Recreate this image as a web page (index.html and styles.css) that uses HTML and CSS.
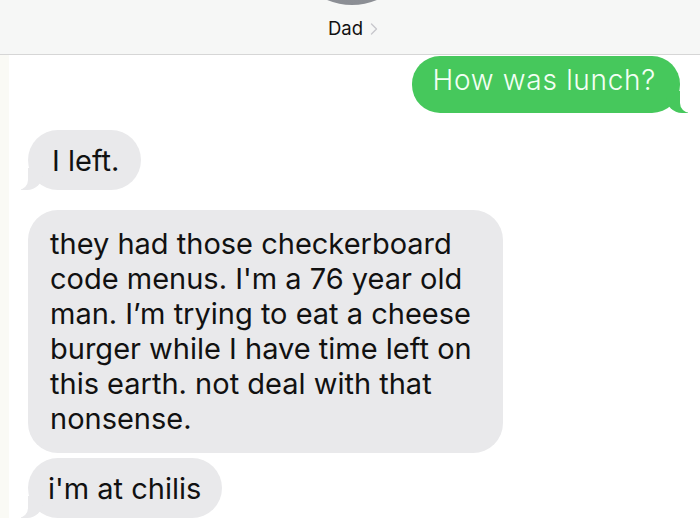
FILE: index.html
```html
<!DOCTYPE html>
<html lang="en">
<head>
  <meta charset="UTF-8">
  <meta name="viewport" content="width=device-width, initial-scale=1">
  <title>Dad - Messages</title>
  <link rel="stylesheet" href="styles.css">
</head>
<body>
  <header class="chat-header">
    <div class="avatar"></div>
    <div class="contact">
      <span class="contact-name">Dad</span>
      <svg class="chevron" width="8" height="12" viewBox="0 0 8 12">
        <path d="M1.5 1 L6.5 6 L1.5 11" fill="none" stroke="#c7c7cc" stroke-width="1.3" stroke-linecap="round" stroke-linejoin="round"/>
      </svg>
    </div>
  </header>
  <main class="thread">
    <div class="bubble out">How was lunch?</div>
    <div class="bubble in first">I left.</div>
    <div class="bubble in long">they had those checkerboard code menus. I'm a 76 year old man. I’m trying to eat a cheese burger while I have time left on this earth. not deal with that nonsense.</div>
    <div class="bubble in last">i'm at chilis</div>
  </main>
</body>
</html>
```

FILE: styles.css
```css
:root {
  --header-bg: #f6f7f6;
  --header-line: #d6d6d6;
  --in-bg: #e9e9eb;
  --out-bg: #46c85c;
  --page-bg: #fff;
}
html, body {
  height: 100%;
}
body {
  margin: 0;
  padding: 0;
  background: var(--page-bg);
  font-family: 'Inter', 'Liberation Sans', sans-serif;
  color: #111;
  overflow: hidden;
  display: flex;
  flex-direction: column;
}
.chat-header {
  height: 54px;
  flex-shrink: 0;
  background: var(--header-bg);
  border-bottom: 1px solid var(--header-line);
  display: flex;
  flex-direction: column;
  align-items: center;
  overflow: hidden;
}
.avatar {
  width: 130px;
  height: 130px;
  flex-shrink: 0;
  margin-top: -125px;
  margin-left: 4px;
  border-radius: 50%;
  background: linear-gradient(#a3a6ab, #8b8e94);
}
.contact {
  margin-top: 12px;
  margin-left: 6px;
  display: flex;
  align-items: center;
  gap: 7px;
}
.contact-name {
  font-size: 18.5px;
  line-height: 22px;
}
.chevron {
  margin-top: 1px;
}
.thread {
  flex: 1;
  min-height: 0;
  display: flex;
  flex-direction: column;
  align-items: flex-start;
  padding: 0 20px 0 28px;
  background: linear-gradient(to right, #fafaf5 9px, transparent 9px);
}
.bubble {
  position: relative;
  flex-shrink: 0;
  font-size: 29px;
  line-height: 35px;
  border-radius: 30px;
}
.bubble.in {
  background: var(--in-bg);
  padding: 13px 22px 12px 24px;
}
.bubble.out {
  align-self: flex-end;
  margin-top: 1px;
  background: var(--out-bg);
  color: #f3fff4;
  font-size: 28px;
  font-weight: 300;
  letter-spacing: 0.7px;
  padding: 7px 24px 15px 21px;
  border-radius: 28px;
}
.bubble.first {
  margin-top: 17px;
}
.bubble.long {
  margin-top: 20px;
  width: 429px;
  padding: 16px 24px 17px 22px;
}
.bubble.last {
  margin-top: 5px;
  padding-left: 20px;
  padding-right: 21px;
}
/* tails */
.bubble.in::before,
.bubble.in::after,
.bubble.out::before,
.bubble.out::after {
  content: "";
  position: absolute;
  bottom: 0;
  height: 22px;
}
.bubble.in::before {
  left: -7px;
  width: 22px;
  background: var(--in-bg);
  border-bottom-right-radius: 16px;
}
.bubble.in::after {
  left: -11px;
  width: 11px;
  background: var(--page-bg);
  border-bottom-right-radius: 10px;
}
.bubble.long::before,
.bubble.long::after {
  display: none;
}
.bubble.out::before {
  right: -8px;
  width: 22px;
  background: var(--out-bg);
  border-bottom-left-radius: 16px;
}
.bubble.out::after {
  right: -12px;
  width: 12px;
  background: var(--page-bg);
  border-bottom-left-radius: 10px;
}
```
